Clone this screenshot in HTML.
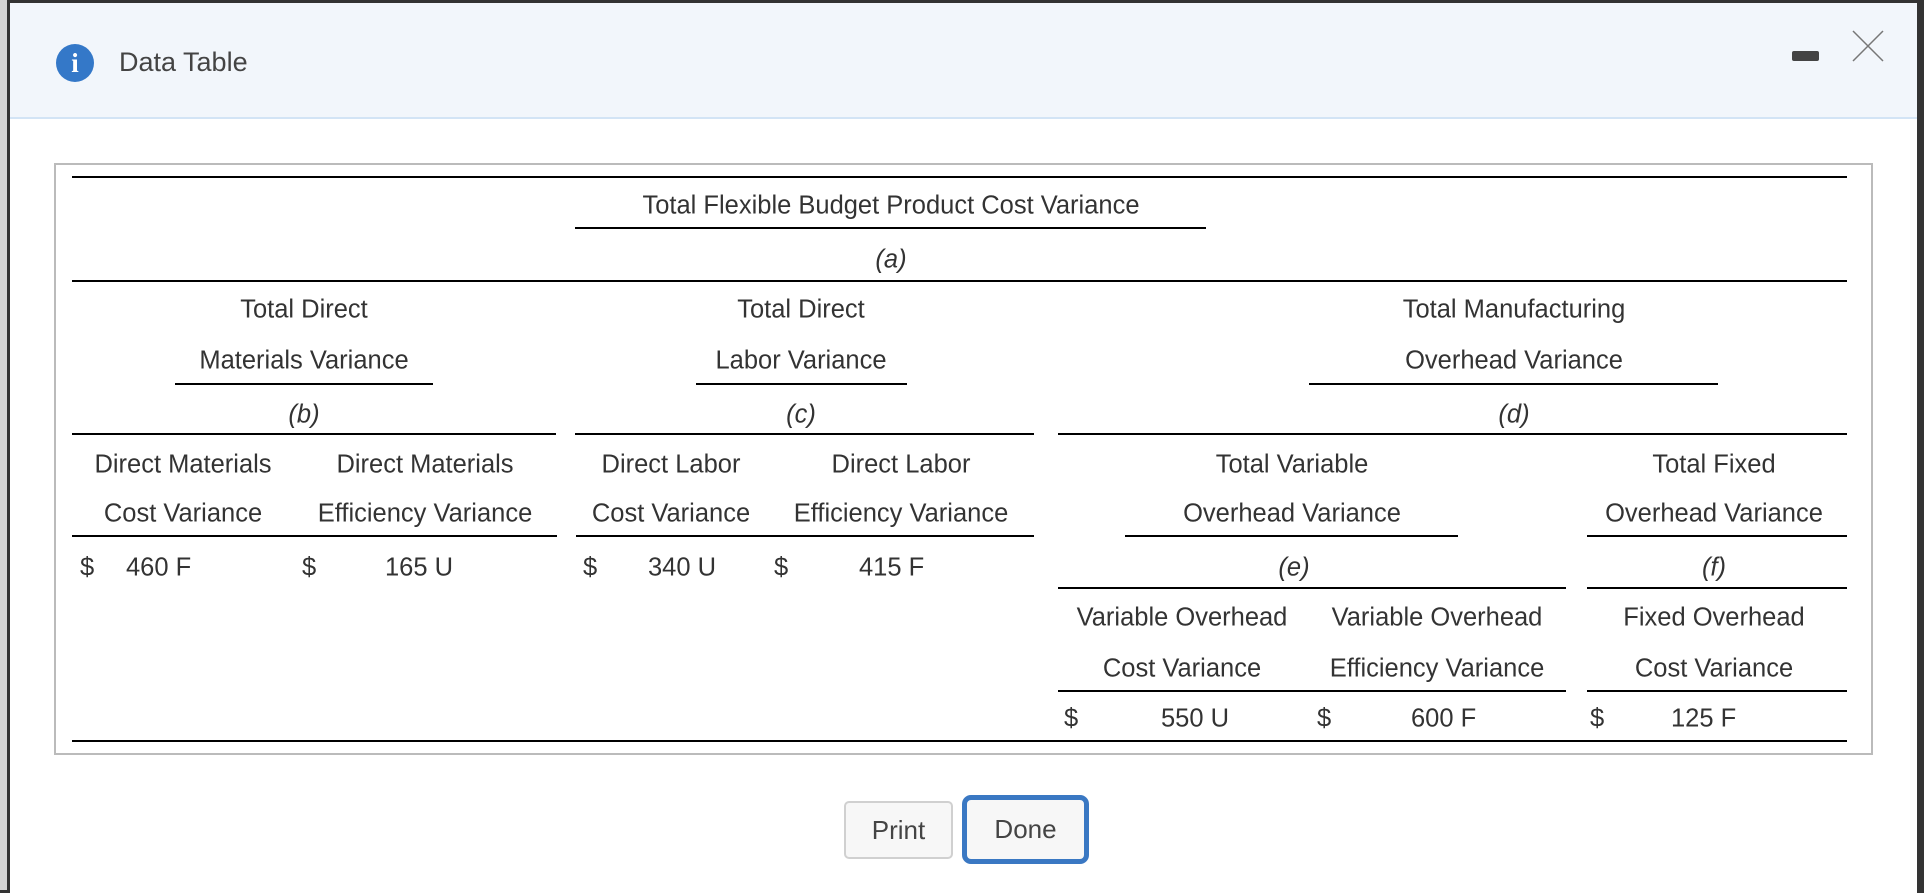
<!DOCTYPE html>
<html><head><meta charset="utf-8"><style>
*{margin:0;padding:0;box-sizing:border-box}
body{width:1924px;height:890px;background:#333;position:relative;overflow:hidden;font-family:"Liberation Sans",Arial,sans-serif;color:#333}
.strip{position:absolute;left:0;top:0;width:7px;height:890px;background:#d4d4d4}
.dlg{position:absolute;left:10px;top:3px;width:1907px;height:890px;background:#fff}
.hdr{position:absolute;left:0;top:0;width:100%;height:116px;background:#f2f6fb;border-bottom:2px solid #d3e4f5}
.ic{position:absolute;left:46px;top:41px;width:38px;height:38px;border-radius:50%;background:#3478c8;color:#fff;font:bold 27px "Liberation Serif",serif;text-align:center;line-height:38px}
.ttl{position:absolute;left:109px;top:44px;font-size:27px;color:#444}
.min{position:absolute;left:1782px;top:48px;width:27px;height:10px;border-radius:2px;background:#444}
.box{position:absolute;left:54px;top:163px;width:1819px;height:592px;border:2px solid #bbb}
.l{position:absolute;height:2px;background:#000}
.t{position:absolute;font-size:25.5px;color:#333;white-space:nowrap;transform:translate(-50%,-50%)}
.v{position:absolute;font-size:25.5px;color:#333;white-space:nowrap;transform:translateY(-50%)}
.i{font-style:italic}
.btn{position:absolute;background:#f7f7f7;font-size:26px;color:#444;text-align:center}
</style></head><body>
<div class="strip"></div>
<div class="dlg">
<div class="hdr">
<div class="ic">i</div>
<div class="ttl">Data Table</div>
<div class="min"></div>
<svg style="position:absolute;left:1842px;top:27px" width="32" height="32"><path d="M1 1L31 31M31 1L1 31" stroke="#777" stroke-width="1.5"/></svg>
</div>
</div>
<div class="box"></div>
<div class="l" style="left:72px;top:176px;width:1775px"></div>
<div class="l" style="left:575px;top:227px;width:631px"></div>
<div class="l" style="left:72px;top:280px;width:1775px"></div>
<div class="l" style="left:175px;top:383px;width:258px"></div>
<div class="l" style="left:696px;top:383px;width:211px"></div>
<div class="l" style="left:1309px;top:383px;width:409px"></div>
<div class="l" style="left:72px;top:433px;width:484px"></div>
<div class="l" style="left:575px;top:433px;width:459px"></div>
<div class="l" style="left:1058px;top:433px;width:789px"></div>
<div class="l" style="left:72px;top:535px;width:485px"></div>
<div class="l" style="left:576px;top:535px;width:458px"></div>
<div class="l" style="left:1125px;top:535px;width:333px"></div>
<div class="l" style="left:1587px;top:535px;width:260px"></div>
<div class="l" style="left:1058px;top:587px;width:508px"></div>
<div class="l" style="left:1587px;top:587px;width:260px"></div>
<div class="l" style="left:1058px;top:690px;width:508px"></div>
<div class="l" style="left:1587px;top:690px;width:260px"></div>
<div class="l" style="left:72px;top:740px;width:1775px"></div>
<div class="t" style="left:891px;top:206px">Total Flexible Budget Product Cost Variance</div>
<div class="t i" style="left:891px;top:260px">(a)</div>
<div class="t" style="left:304px;top:310px">Total Direct</div>
<div class="t" style="left:304px;top:361px">Materials Variance</div>
<div class="t i" style="left:304px;top:415px">(b)</div>
<div class="t" style="left:801px;top:310px">Total Direct</div>
<div class="t" style="left:801px;top:361px">Labor Variance</div>
<div class="t i" style="left:801px;top:415px">(c)</div>
<div class="t" style="left:1514px;top:310px">Total Manufacturing</div>
<div class="t" style="left:1514px;top:361px">Overhead Variance</div>
<div class="t i" style="left:1514px;top:415px">(d)</div>
<div class="t" style="left:183px;top:465px">Direct Materials</div>
<div class="t" style="left:183px;top:514px">Cost Variance</div>
<div class="t" style="left:425px;top:465px">Direct Materials</div>
<div class="t" style="left:425px;top:514px">Efficiency Variance</div>
<div class="t" style="left:671px;top:465px">Direct Labor</div>
<div class="t" style="left:671px;top:514px">Cost Variance</div>
<div class="t" style="left:901px;top:465px">Direct Labor</div>
<div class="t" style="left:901px;top:514px">Efficiency Variance</div>
<div class="t" style="left:1292px;top:465px">Total Variable</div>
<div class="t" style="left:1292px;top:514px">Overhead Variance</div>
<div class="t" style="left:1714px;top:465px">Total Fixed</div>
<div class="t" style="left:1714px;top:514px">Overhead Variance</div>
<div class="t i" style="left:1294px;top:568px">(e)</div>
<div class="t i" style="left:1714px;top:568px">(f)</div>
<div class="t" style="left:1182px;top:618px">Variable Overhead</div>
<div class="t" style="left:1182px;top:669px">Cost Variance</div>
<div class="t" style="left:1437px;top:618px">Variable Overhead</div>
<div class="t" style="left:1437px;top:669px">Efficiency Variance</div>
<div class="t" style="left:1714px;top:618px">Fixed Overhead</div>
<div class="t" style="left:1714px;top:669px">Cost Variance</div>
<div class="v" style="left:80px;top:568px">$</div><div class="v" style="left:126px;top:568px">460 F</div>
<div class="v" style="left:302px;top:568px">$</div><div class="v" style="left:385px;top:568px">165 U</div>
<div class="v" style="left:583px;top:568px">$</div><div class="v" style="left:648px;top:568px">340 U</div>
<div class="v" style="left:774px;top:568px">$</div><div class="v" style="left:859px;top:568px">415 F</div>
<div class="v" style="left:1064px;top:719px">$</div><div class="v" style="left:1161px;top:719px">550 U</div>
<div class="v" style="left:1317px;top:719px">$</div><div class="v" style="left:1411px;top:719px">600 F</div>
<div class="v" style="left:1590px;top:719px">$</div><div class="v" style="left:1671px;top:719px">125 F</div>
<div class="btn" style="left:844px;top:801px;width:109px;height:58px;border:2px solid #d0d0d0;border-radius:5px;line-height:54px">Print</div>
<div class="btn" style="left:962px;top:795px;width:127px;height:69px;border:5px solid #3a78c3;border-radius:9px;line-height:59px">Done</div>
</body></html>
